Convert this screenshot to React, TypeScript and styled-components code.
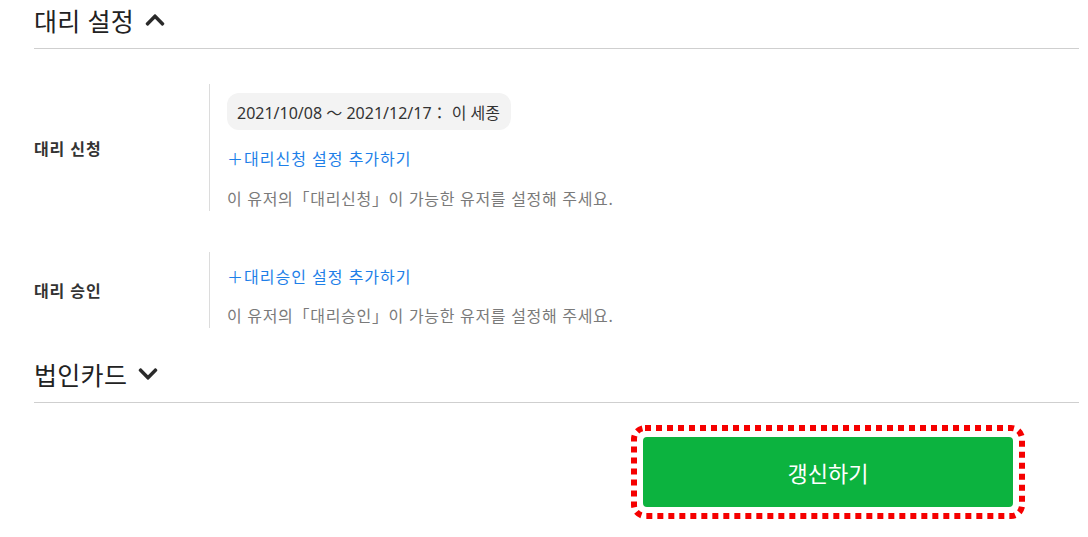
import React from 'react';
import styled, { createGlobalStyle } from 'styled-components';
import { FaChevronUp, FaChevronDown } from 'react-icons/fa';

const GlobalStyle = createGlobalStyle`
  html, body, #root {
    min-height: 100%;
  }
  body {
    margin: 0;
    background: #fff;
    font-family: "Noto Sans", "Noto Sans CJK KR", sans-serif;
    color: #333;
  }
`;

const Page = styled.div`
  padding: 0 9px 30px 34px;
`;

const SectionHeader = styled.div<{ $spaced?: boolean }>`
  display: flex;
  align-items: center;
  gap: 10px;
  height: 40px;
  padding-bottom: 8px;
  margin-top: ${(p) => (p.$spaced ? '26px' : '0')};
  border-bottom: 1px solid #cfcfcf;
  font-size: 25px;
  letter-spacing: 0.3px;
  color: #222;
  svg {
    font-size: 22px;
    color: #2a2a2a;
  }
`;

const SettingRow = styled.div<{ $top: number }>`
  display: grid;
  grid-template-columns: 175px 1fr;
  align-items: center;
  margin-top: ${(p) => p.$top}px;
`;

const RowLabel = styled.div`
  font-size: 16px;
  font-weight: 700;
  letter-spacing: 0.9px;
  color: #333;
`;

const RowBody = styled.div<{ $pad: number; $gap: number }>`
  display: flex;
  flex-direction: column;
  align-items: flex-start;
  gap: ${(p) => p.$gap}px;
  border-left: 1px solid #dcdcdc;
  padding: ${(p) => p.$pad}px 0 1px 17px;
`;

const Chip = styled.div`
  background: #f3f3f3;
  border-radius: 12px;
  height: 37px;
  padding: 0 11px 0 10px;
  display: flex;
  align-items: center;
  font-size: 16px;
  color: #333;
`;

const AddLink = styled.a`
  font-size: 16px;
  line-height: 22px;
  letter-spacing: 1px;
  color: #1e7fe8;
  text-decoration: none;
  cursor: pointer;
`;

const Helper = styled.p`
  margin: 0;
  font-size: 16px;
  line-height: 22px;
  letter-spacing: 0.7px;
  color: #7a7a7a;
`;

const Footer = styled.div`
  display: flex;
  justify-content: flex-end;
  padding: 34px 66px 0 0;
`;

const ButtonWrap = styled.div`
  position: relative;
`;

const FocusRing = styled.svg`
  position: absolute;
  left: -12px;
  top: -12px;
  width: 394px;
  height: 94px;
  overflow: visible;
  pointer-events: none;
`;

const UpdateButton = styled.button`
  display: block;
  width: 370px;
  height: 70px;
  border: none;
  border-radius: 4px;
  background: #0cb33f;
  color: #fff;
  font-family: "Noto Sans", "Noto Sans CJK KR", sans-serif;
  font-size: 22px;
  cursor: pointer;
`;

const App: React.FC = () => {
  return (
    <>
      <GlobalStyle />
      <Page>
        <SectionHeader>
          대리 설정 <FaChevronUp />
        </SectionHeader>

        <SettingRow $top={35}>
          <RowLabel>대리 신청</RowLabel>
          <RowBody $pad={9} $gap={18}>
            <Chip>2021/10/08 〜 2021/12/17： 이 세종</Chip>
            <AddLink>＋대리신청 설정 추가하기</AddLink>
            <Helper>이 유저의「대리신청」이 가능한 유저를 설정해 주세요.</Helper>
          </RowBody>
        </SettingRow>

        <SettingRow $top={41}>
          <RowLabel>대리 승인</RowLabel>
          <RowBody $pad={14} $gap={17}>
            <AddLink>＋대리승인 설정 추가하기</AddLink>
            <Helper>이 유저의「대리승인」이 가능한 유저를 설정해 주세요.</Helper>
          </RowBody>
        </SettingRow>

        <SectionHeader $spaced>
          법인카드 <FaChevronDown />
        </SectionHeader>

        <Footer>
          <ButtonWrap>
            <UpdateButton>갱신하기</UpdateButton>
            <FocusRing viewBox="0 0 394 94">
              <rect
                x="3"
                y="3"
                width="388"
                height="88"
                rx="11"
                fill="none"
                stroke="#f50000"
                strokeWidth="6"
                strokeDasharray="6 5"
              />
            </FocusRing>
          </ButtonWrap>
        </Footer>
      </Page>
    </>
  );
};

export default App;
